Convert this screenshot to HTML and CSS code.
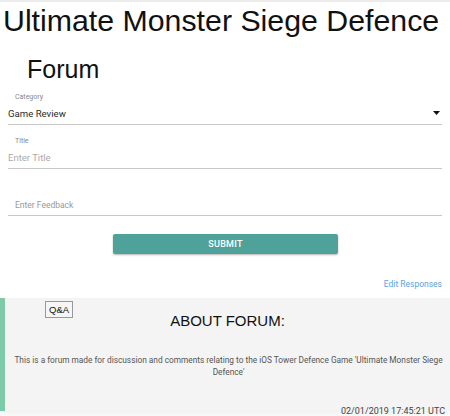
FILE: index.html
```html
<!DOCTYPE html>
<html>
<head>
<meta charset="utf-8">
<link rel="stylesheet" href="styles.css">
</head>
<body>
<div class="page">
  <h1 class="app-title">Ultimate Monster Siege Defence</h1>
  <h2 class="page-title">Forum</h2>
  <form class="form">
    <div class="field field-category">
      <label class="field-label">Category</label>
      <div class="select">
        <span class="select-value">Game Review</span>
        <svg class="select-arrow" width="7" height="4" viewBox="0 0 7 4"><path d="M0 0h7L3.5 4z" fill="#111"/></svg>
      </div>
    </div>
    <div class="field">
      <label class="field-label">Title</label>
      <div class="input placeholder">Enter Title</div>
    </div>
    <div class="field field-feedback">
      <div class="input placeholder indent">Enter Feedback</div>
    </div>
    <div class="actions">
      <button type="button" class="submit">SUBMIT</button>
    </div>
  </form>
  <div class="edit-row"><a class="edit-link">Edit Responses</a></div>
  <section class="about">
    <div class="qa-row"><span class="qa">Q&amp;A</span></div>
    <h3 class="about-title">ABOUT FORUM:</h3>
    <p class="about-text">This is a forum made for discussion and comments relating to the iOS Tower Defence Game 'Ultimate Monster Siege Defence'</p>
  </section>
  <div class="stamp">02/01/2019 17:45:21 UTC</div>
</div>
</body>
</html>
```
FILE: styles.css
```css
html, body {
  margin: 0;
  padding: 0;
  background: #fff;
}
.page {
  border-top: 2px solid #ececec;
  font-family: Roboto, "Liberation Sans", sans-serif;
  color: #222;
}
.app-title {
  margin: 0;
  padding: 1px 0 0 3px;
  font-family: "Liberation Sans", Arial, sans-serif;
  font-weight: 400;
  font-size: 30.3px;
  line-height: 36px;
  color: #111;
}
.page-title {
  margin: 0;
  padding: 15px 0 0 27px;
  font-family: "Liberation Sans", Arial, sans-serif;
  font-weight: 400;
  font-size: 25px;
  line-height: 30px;
  color: #111;
}
.form {
  padding: 0 8px;
  margin-top: 9px;
}
.field {
  display: flex;
  flex-direction: column;
  border-bottom: 1px solid #c8c8c8;
  margin-bottom: 11px;
}
.field-category {
  margin-bottom: 12px;
}
.field-label {
  font-size: 7px;
  color: #888;
  padding-left: 7px;
  line-height: 9px;
}
.select {
  display: flex;
  align-items: center;
  justify-content: space-between;
  height: 22px;
  padding-right: 2px;
}
.select-value {
  font-size: 9.6px;
  color: #2a2a2a;
}
.input {
  height: 22px;
  display: flex;
  align-items: center;
  font-size: 9.5px;
}
.placeholder {
  color: #aaa;
}
.indent {
  padding-left: 7px;
  font-size: 8.5px;
  color: #999;
  height: 21px;
}
.field-feedback {
  margin-top: 25px;
  margin-bottom: 18px;
}
.actions {
  display: flex;
  justify-content: center;
}
.submit {
  width: 225px;
  height: 20px;
  margin-left: 1px;
  border: none;
  border-radius: 2px;
  background: #4fa29a;
  color: #fff;
  font-family: Roboto, sans-serif;
  font-weight: 500;
  font-size: 9px;
  letter-spacing: 0.3px;
  box-shadow: 0 1px 2px rgba(0,0,0,0.3);
}
.edit-row {
  display: flex;
  justify-content: flex-end;
  padding: 24px 8px 0 0;
  height: 20px;
}
.edit-link {
  font-size: 8.5px;
  color: #5c9fe0;
  line-height: 12px;
}
.about {
  background: #f4f4f4;
  border-left: 5px solid #7ecba9;
  height: 113px;
  box-shadow: 0 4px 6px rgba(0,0,0,0.06);
  text-align: center;
  padding-top: 3px;
  box-sizing: border-box;
}
.qa-row {
  display: flex;
  padding-left: 40px;
}
.qa {
  border: 1px solid #999;
  font-family: "Liberation Sans", Arial, sans-serif;
  font-size: 9.5px;
  padding: 2px 3px;
  background: #f6f6f6;
  color: #111;
}
.about-title {
  margin: -6px 0 0;
  font-family: "Liberation Sans", Arial, sans-serif;
  font-weight: 400;
  font-size: 15px;
  color: #111;
}
.about-text {
  margin: 25px 6px 0 8px;
  font-size: 8.3px;
  line-height: 12px;
  color: #555;
}
.stamp {
  text-align: right;
  padding-right: 5px;
  margin-top: -5px;
  font-size: 9px;
  line-height: 11px;
  color: #444;
  position: relative;
}
```
